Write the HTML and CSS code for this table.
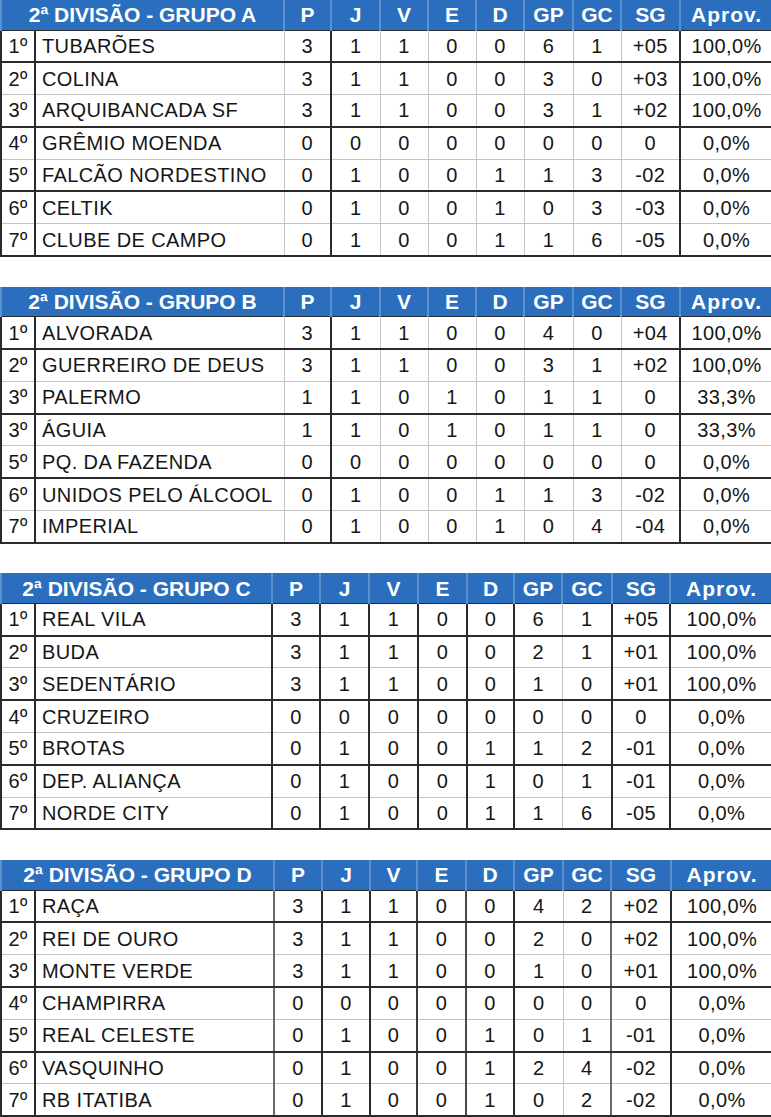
FILE: index.html
```html
<!DOCTYPE html>
<html lang="pt-BR">
<head>
<meta charset="utf-8">
<title>2ª Divisão - Classificação</title>
<link rel="stylesheet" href="styles.css">
</head>
<body>
<main class="page">

<table class="grp grp-ab">
  <colgroup>
    <col class="c-pos"><col class="c-name"><col class="c-p"><col class="c-j"><col class="c-v"><col class="c-e"><col class="c-d"><col class="c-gp"><col class="c-gc"><col class="c-sg"><col class="c-ap">
  </colgroup>
  <thead>
    <tr><th colspan="2">2ª DIVISÃO - GRUPO A</th><th>P</th><th>J</th><th>V</th><th>E</th><th>D</th><th>GP</th><th>GC</th><th>SG</th><th class="ap">Aprov.</th></tr>
  </thead>
  <tbody>
    <tr class="thick"><td>1º</td><td class="name">TUBARÕES</td><td>3</td><td>1</td><td>1</td><td>0</td><td>0</td><td>6</td><td>1</td><td>+05</td><td>100,0%</td></tr>
    <tr class="thin"><td>2º</td><td class="name">COLINA</td><td>3</td><td>1</td><td>1</td><td>0</td><td>0</td><td>3</td><td>0</td><td>+03</td><td>100,0%</td></tr>
    <tr class="thick"><td>3º</td><td class="name">ARQUIBANCADA SF</td><td>3</td><td>1</td><td>1</td><td>0</td><td>0</td><td>3</td><td>1</td><td>+02</td><td>100,0%</td></tr>
    <tr class="thin"><td>4º</td><td class="name">GRÊMIO MOENDA</td><td>0</td><td>0</td><td>0</td><td>0</td><td>0</td><td>0</td><td>0</td><td>0</td><td>0,0%</td></tr>
    <tr class="thick"><td>5º</td><td class="name">FALCÃO NORDESTINO</td><td>0</td><td>1</td><td>0</td><td>0</td><td>1</td><td>1</td><td>3</td><td>-02</td><td>0,0%</td></tr>
    <tr class="thin"><td>6º</td><td class="name">CELTIK</td><td>0</td><td>1</td><td>0</td><td>0</td><td>1</td><td>0</td><td>3</td><td>-03</td><td>0,0%</td></tr>
    <tr class="thick"><td>7º</td><td class="name">CLUBE DE CAMPO</td><td>0</td><td>1</td><td>0</td><td>0</td><td>1</td><td>1</td><td>6</td><td>-05</td><td>0,0%</td></tr>
  </tbody>
</table>

<table class="grp grp-ab">
  <colgroup>
    <col class="c-pos"><col class="c-name"><col class="c-p"><col class="c-j"><col class="c-v"><col class="c-e"><col class="c-d"><col class="c-gp"><col class="c-gc"><col class="c-sg"><col class="c-ap">
  </colgroup>
  <thead>
    <tr><th colspan="2">2ª DIVISÃO - GRUPO B</th><th>P</th><th>J</th><th>V</th><th>E</th><th>D</th><th>GP</th><th>GC</th><th>SG</th><th class="ap">Aprov.</th></tr>
  </thead>
  <tbody>
    <tr class="thick"><td>1º</td><td class="name">ALVORADA</td><td>3</td><td>1</td><td>1</td><td>0</td><td>0</td><td>4</td><td>0</td><td>+04</td><td>100,0%</td></tr>
    <tr class="thin"><td>2º</td><td class="name">GUERREIRO DE DEUS</td><td>3</td><td>1</td><td>1</td><td>0</td><td>0</td><td>3</td><td>1</td><td>+02</td><td>100,0%</td></tr>
    <tr class="thick"><td>3º</td><td class="name">PALERMO</td><td>1</td><td>1</td><td>0</td><td>1</td><td>0</td><td>1</td><td>1</td><td>0</td><td>33,3%</td></tr>
    <tr class="thin"><td>3º</td><td class="name">ÁGUIA</td><td>1</td><td>1</td><td>0</td><td>1</td><td>0</td><td>1</td><td>1</td><td>0</td><td>33,3%</td></tr>
    <tr class="thick"><td>5º</td><td class="name">PQ. DA FAZENDA</td><td>0</td><td>0</td><td>0</td><td>0</td><td>0</td><td>0</td><td>0</td><td>0</td><td>0,0%</td></tr>
    <tr class="thin"><td>6º</td><td class="name">UNIDOS PELO ÁLCOOL</td><td>0</td><td>1</td><td>0</td><td>0</td><td>1</td><td>1</td><td>3</td><td>-02</td><td>0,0%</td></tr>
    <tr class="thick"><td>7º</td><td class="name">IMPERIAL</td><td>0</td><td>1</td><td>0</td><td>0</td><td>1</td><td>0</td><td>4</td><td>-04</td><td>0,0%</td></tr>
  </tbody>
</table>

<table class="grp grp-c">
  <colgroup>
    <col class="c-pos"><col class="c-name"><col class="c-p"><col class="c-j"><col class="c-v"><col class="c-e"><col class="c-d"><col class="c-gp"><col class="c-gc"><col class="c-sg"><col class="c-ap">
  </colgroup>
  <thead>
    <tr><th colspan="2">2ª DIVISÃO - GRUPO C</th><th>P</th><th>J</th><th>V</th><th>E</th><th>D</th><th>GP</th><th>GC</th><th>SG</th><th class="ap">Aprov.</th></tr>
  </thead>
  <tbody>
    <tr class="thick"><td>1º</td><td class="name">REAL VILA</td><td>3</td><td>1</td><td>1</td><td>0</td><td>0</td><td>6</td><td>1</td><td>+05</td><td>100,0%</td></tr>
    <tr class="thin"><td>2º</td><td class="name">BUDA</td><td>3</td><td>1</td><td>1</td><td>0</td><td>0</td><td>2</td><td>1</td><td>+01</td><td>100,0%</td></tr>
    <tr class="thick"><td>3º</td><td class="name">SEDENTÁRIO</td><td>3</td><td>1</td><td>1</td><td>0</td><td>0</td><td>1</td><td>0</td><td>+01</td><td>100,0%</td></tr>
    <tr class="thin"><td>4º</td><td class="name">CRUZEIRO</td><td>0</td><td>0</td><td>0</td><td>0</td><td>0</td><td>0</td><td>0</td><td>0</td><td>0,0%</td></tr>
    <tr class="thick"><td>5º</td><td class="name">BROTAS</td><td>0</td><td>1</td><td>0</td><td>0</td><td>1</td><td>1</td><td>2</td><td>-01</td><td>0,0%</td></tr>
    <tr class="thin"><td>6º</td><td class="name">DEP. ALIANÇA</td><td>0</td><td>1</td><td>0</td><td>0</td><td>1</td><td>0</td><td>1</td><td>-01</td><td>0,0%</td></tr>
    <tr class="thick"><td>7º</td><td class="name">NORDE CITY</td><td>0</td><td>1</td><td>0</td><td>0</td><td>1</td><td>1</td><td>6</td><td>-05</td><td>0,0%</td></tr>
  </tbody>
</table>

<table class="grp grp-d">
  <colgroup>
    <col class="c-pos"><col class="c-name"><col class="c-p"><col class="c-j"><col class="c-v"><col class="c-e"><col class="c-d"><col class="c-gp"><col class="c-gc"><col class="c-sg"><col class="c-ap">
  </colgroup>
  <thead>
    <tr><th colspan="2">2ª DIVISÃO - GRUPO D</th><th>P</th><th>J</th><th>V</th><th>E</th><th>D</th><th>GP</th><th>GC</th><th>SG</th><th class="ap">Aprov.</th></tr>
  </thead>
  <tbody>
    <tr class="thick"><td>1º</td><td class="name">RAÇA</td><td>3</td><td>1</td><td>1</td><td>0</td><td>0</td><td>4</td><td>2</td><td>+02</td><td>100,0%</td></tr>
    <tr class="thin"><td>2º</td><td class="name">REI DE OURO</td><td>3</td><td>1</td><td>1</td><td>0</td><td>0</td><td>2</td><td>0</td><td>+02</td><td>100,0%</td></tr>
    <tr class="thick"><td>3º</td><td class="name">MONTE VERDE</td><td>3</td><td>1</td><td>1</td><td>0</td><td>0</td><td>1</td><td>0</td><td>+01</td><td>100,0%</td></tr>
    <tr class="thin"><td>4º</td><td class="name">CHAMPIRRA</td><td>0</td><td>0</td><td>0</td><td>0</td><td>0</td><td>0</td><td>0</td><td>0</td><td>0,0%</td></tr>
    <tr class="thick"><td>5º</td><td class="name">REAL CELESTE</td><td>0</td><td>1</td><td>0</td><td>0</td><td>1</td><td>0</td><td>1</td><td>-01</td><td>0,0%</td></tr>
    <tr class="thin"><td>6º</td><td class="name">VASQUINHO</td><td>0</td><td>1</td><td>0</td><td>0</td><td>1</td><td>2</td><td>4</td><td>-02</td><td>0,0%</td></tr>
    <tr class="thick"><td>7º</td><td class="name">RB ITATIBA</td><td>0</td><td>1</td><td>0</td><td>0</td><td>1</td><td>0</td><td>2</td><td>-02</td><td>0,0%</td></tr>
  </tbody>
</table>

</main>
</body>
</html>
```

FILE: styles.css
```css
html, body {
  margin: 0;
  padding: 0;
  background: #ffffff;
}

.page {
  display: flex;
  flex-direction: column;
  gap: 29.6px;
  width: 771px;
}

.grp {
  width: 771px;
  table-layout: fixed;
  border-collapse: collapse;
  font-family: "Liberation Sans", Arial, sans-serif;
  color: #161616;
  border-left: 2px solid #2b2b2b;
}

.grp th {
  height: 29.5px;
  padding: 0;
  background: #2a6ebd;
  color: #ffffff;
  font-size: 21px;
  font-weight: bold;
  text-align: center;
  line-height: 29px;
  border-left: 2px solid #5d90cf;
  border-bottom: 1px solid #2b2b2b;
  white-space: nowrap;
  overflow: hidden;
}

.grp th.ap {
  letter-spacing: 1px;
}

.grp td {
  height: 30.8px;
  padding: 0;
  font-size: 20px;
  letter-spacing: 0.4px;
  text-align: center;
  line-height: 24px;
  white-space: nowrap;
  overflow: hidden;
}

.grp td.name {
  text-align: left;
  padding-left: 6px;
}

.grp tr.thick td { border-bottom: 2px solid #2b2b2b; }
.grp tr.thin td { border-bottom: 1px solid #c4c4c4; }

/* Groups A and B */
.grp-ab .c-pos { width: 34px; }
.grp-ab .c-name { width: 249px; border-left: 2px solid #2b2b2b; }
.grp-ab .c-p { width: 47px; border-left: 1px solid #c4c4c4; }
.grp-ab .c-j { width: 49px; border-left: 2px solid #2b2b2b; }
.grp-ab .c-v { width: 48px; border-left: 1px solid #c4c4c4; }
.grp-ab .c-e { width: 48px; border-left: 1px solid #c4c4c4; }
.grp-ab .c-d { width: 48px; border-left: 1px solid #c4c4c4; }
.grp-ab .c-gp { width: 49px; border-left: 1px solid #c4c4c4; }
.grp-ab .c-gc { width: 48px; border-left: 1px solid #c4c4c4; }
.grp-ab .c-sg { width: 59px; border-left: 1px solid #c4c4c4; }
.grp-ab .c-ap { width: 92px; border-left: 2px solid #2b2b2b; }

/* Group C */
.grp-c .c-pos { width: 34px; }
.grp-c .c-name { width: 237px; border-left: 2px solid #2b2b2b; }
.grp-c .c-p { width: 48px; border-left: 2px solid #2b2b2b; }
.grp-c .c-j { width: 49px; border-left: 2px solid #2b2b2b; }
.grp-c .c-v { width: 49px; border-left: 2px solid #2b2b2b; }
.grp-c .c-e { width: 49px; border-left: 2px solid #2b2b2b; }
.grp-c .c-d { width: 47px; border-left: 2px solid #2b2b2b; }
.grp-c .c-gp { width: 48px; border-left: 2px solid #2b2b2b; }
.grp-c .c-gc { width: 50px; border-left: 1px solid #c4c4c4; }
.grp-c .c-sg { width: 58px; border-left: 2px solid #2b2b2b; }
.grp-c .c-ap { width: 102px; border-left: 2px solid #2b2b2b; }

/* Group D */
.grp-d .c-pos { width: 34px; }
.grp-d .c-name { width: 239px; border-left: 2px solid #2b2b2b; }
.grp-d .c-p { width: 48px; border-left: 2px solid #6a6a6a; }
.grp-d .c-j { width: 48px; border-left: 2px solid #2b2b2b; }
.grp-d .c-v { width: 47px; border-left: 2px solid #2b2b2b; }
.grp-d .c-e { width: 49px; border-left: 2px solid #3a3a3a; }
.grp-d .c-d { width: 48px; border-left: 2px solid #4a4a4a; }
.grp-d .c-gp { width: 49px; border-left: 2px solid #2b2b2b; }
.grp-d .c-gc { width: 48px; border-left: 1px solid #c4c4c4; }
.grp-d .c-sg { width: 60px; border-left: 2px solid #6a6a6a; }
.grp-d .c-ap { width: 101px; border-left: 2px solid #2b2b2b; }
```
